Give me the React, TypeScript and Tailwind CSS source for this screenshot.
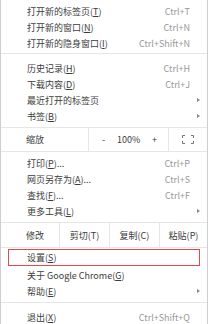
import React from 'react';

// Chrome's main menu (Chinese locale), small variant
const font = { fontFamily: '"Noto Sans CJK SC", "Noto Sans", sans-serif' };

const Sep: React.FC<{ className?: string }> = ({ className = '' }) => (
  <div className={`h-px bg-[#e6e6e6] ${className}`} />
);

const Arrow = () => (
  <span className="absolute right-[7px] top-1/2 -translate-y-1/2 w-0 h-0 border-y-[2.5px] border-y-transparent border-l-[3px] border-l-[#888]" />
);

interface ItemProps {
  label: React.ReactNode;
  shortcut?: string;
  submenu?: boolean;
}

const Item: React.FC<ItemProps> = ({ label, shortcut, submenu }) => (
  <div className="relative flex items-center h-4 pl-[26px] pr-[17px] text-[9px] text-[#3c3c3c]">
    <span className="flex-1 whitespace-nowrap">{label}</span>
    {shortcut && <span className="text-[#999] whitespace-nowrap">{shortcut}</span>}
    {submenu && <Arrow />}
  </div>
);

const U: React.FC<{ children: React.ReactNode }> = ({ children }) => (
  <span className="underline underline-offset-1">{children}</span>
);

export default function App() {
  return (
    <div style={font} className="w-[208px] h-[324px] bg-white border-x border-[#cfcfcf] overflow-hidden pt-[3px] leading-none">
      <Item label={<>打开新的标签页(<U>T</U>)</>} shortcut="Ctrl+T" />
      <Item label={<>打开新的窗口(<U>N</U>)</>} shortcut="Ctrl+N" />
      <Item label={<>打开新的隐身窗口(<U>I</U>)</>} shortcut="Ctrl+Shift+N" />
      <Sep className="mt-[2px] mb-[6px]" />
      <Item label={<>历史记录(<U>H</U>)</>} shortcut="Ctrl+H" />
      <Item label={<>下载内容(<U>D</U>)</>} shortcut="Ctrl+J" />
      <Item label="最近打开的标签页" submenu />
      <Item label={<>书签(<U>B</U>)</>} submenu />
      <Sep className="mt-[3px]" />

      {/* zoom row */}
      <div className="flex h-[23px] text-[9px] text-[#3c3c3c]">
        <div className="w-[88px] flex items-center pl-[25px] border-r border-[#e6e6e6]">缩放</div>
        <div className="w-[80px] flex items-center justify-between pl-[13px] pr-[11px] border-r border-[#e6e6e6]">
          <span>-</span>
          <span>100%</span>
          <span>+</span>
        </div>
        <div className="flex-1 flex items-center justify-center">
          <svg width="12" height="9" viewBox="0 0 12 9" fill="none" stroke="#777" strokeWidth="1">
            <path d="M0.5 3V0.5H3M9 0.5H11.5V3M11.5 6V8.5H9M3 8.5H0.5V6" />
          </svg>
        </div>
      </div>
      <Sep className="mb-[3px]" />

      <Item label={<>打印(<U>P</U>)...</>} shortcut="Ctrl+P" />
      <Item label={<>网页另存为(<U>A</U>)...</>} shortcut="Ctrl+S" />
      <Item label={<>查找(<U>F</U>)...</>} shortcut="Ctrl+F" />
      <Item label={<>更多工具(<U>L</U>)</>} submenu />
      <Sep className="mt-[3px]" />

      {/* edit row */}
      <div className="flex h-[24px] text-[9px] text-[#3c3c3c]">
        <div className="w-[59px] flex items-center pl-[25px] border-r border-[#e6e6e6]">修改</div>
        <div className="w-[50px] flex items-center justify-center border-r border-[#e6e6e6]">剪切(T)</div>
        <div className="w-[50px] flex items-center justify-center border-r border-[#e6e6e6]">复制(C)</div>
        <div className="flex-1 flex items-center justify-center">粘贴(P)</div>
      </div>
      <Sep />

      <div className="mx-[7px] mt-[1px] mb-[1px] border border-[#e8484a] h-[17px] flex items-center pl-[18px] text-[9px] text-[#3c3c3c]">
        设置(<U>S</U>)
      </div>
      <Item label={<>关于 Google Chrome(<U>G</U>)</>} />
      <Item label={<>帮助(<U>E</U>)</>} submenu />
      <Sep className="mt-[3px] mb-[6px]" />
      <Item label={<>退出(<U>X</U>)</>} shortcut="Ctrl+Shift+Q" />
    </div>
  );
}
